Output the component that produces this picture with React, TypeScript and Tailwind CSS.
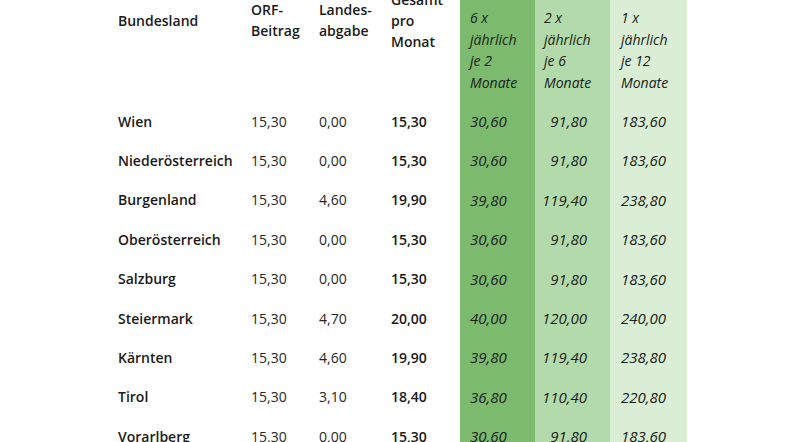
const rows = [
  ["Wien", "15,30", "0,00", "15,30", "30,60", "91,80", "183,60"],
  ["Niederösterreich", "15,30", "0,00", "15,30", "30,60", "91,80", "183,60"],
  ["Burgenland", "15,30", "4,60", "19,90", "39,80", "119,40", "238,80"],
  ["Oberösterreich", "15,30", "0,00", "15,30", "30,60", "91,80", "183,60"],
  ["Salzburg", "15,30", "0,00", "15,30", "30,60", "91,80", "183,60"],
  ["Steiermark", "15,30", "4,70", "20,00", "40,00", "120,00", "240,00"],
  ["Kärnten", "15,30", "4,60", "19,90", "39,80", "119,40", "238,80"],
  ["Tirol", "15,30", "3,10", "18,40", "36,80", "110,40", "220,80"],
  ["Vorarlberg", "15,30", "0,00", "15,30", "30,60", "91,80", "183,60"],
];

const grid = "grid grid-cols-[133px_68px_72px_69px_75px_75px_77px]";

function PlainHead({ lines }: { lines: string[] }) {
  return (
    <div className="flex h-[40px] flex-col justify-center font-semibold leading-[21px]">
      {lines.map((l) => (
        <span key={l} className="whitespace-nowrap">{l}</span>
      ))}
    </div>
  );
}

function GreenHead({ lines, bg, pad }: { lines: string[]; bg: string; pad: string }) {
  return (
    <div className={`${bg} ${pad} flex flex-col pt-[7px] italic leading-[21.5px] text-[#1a221a]`}>
      {lines.map((l) => (
        <span key={l} className="whitespace-nowrap">{l}</span>
      ))}
    </div>
  );
}

export default function App() {
  return (
    <div className="h-[442px] w-[786px] overflow-hidden bg-white pl-[118px] text-[14px] text-[#1a1a1a] [font-family:'Open_Sans',sans-serif]">
      <div className={`${grid} h-[101.5px]`}>
        <PlainHead lines={["Bundesland"]} />
        <PlainHead lines={["ORF-", "Beitrag"]} />
        <PlainHead lines={["Landes-", "abgabe"]} />
        <PlainHead lines={["Gesamt", "pro", "Monat"]} />
        <GreenHead lines={["6 x", "jährlich", "je 2", "Monate"]} bg="bg-[#7cba6e]" pad="pl-[10px]" />
        <GreenHead lines={["2 x", "jährlich", "je 6", "Monate"]} bg="bg-[#b3daaa]" pad="pl-[9px]" />
        <GreenHead lines={["1 x", "jährlich", "je 12", "Monate"]} bg="bg-[#d9eed4]" pad="pl-[11px]" />
      </div>
      {rows.map((r) => (
        <div key={r[0]} className={`${grid} h-[39.4px] items-stretch`}>
          <div className="flex items-center font-semibold">{r[0]}</div>
          <div className="flex items-center text-[#262626]">{r[1]}</div>
          <div className="flex items-center text-[#262626]">{r[2]}</div>
          <div className="flex items-center font-semibold">{r[3]}</div>
          <div className="flex items-center bg-[#7cba6e] pl-[10px] text-[15px] italic text-[#1a221a]">{r[4]}</div>
          <div className="flex items-center justify-end bg-[#b3daaa] pr-[23px] text-[15px] italic text-[#1a221a]">{r[5]}</div>
          <div className="flex items-center bg-[#d9eed4] pl-[11px] text-[15px] italic text-[#1a221a]">{r[6]}</div>
        </div>
      ))}
    </div>
  );
}
